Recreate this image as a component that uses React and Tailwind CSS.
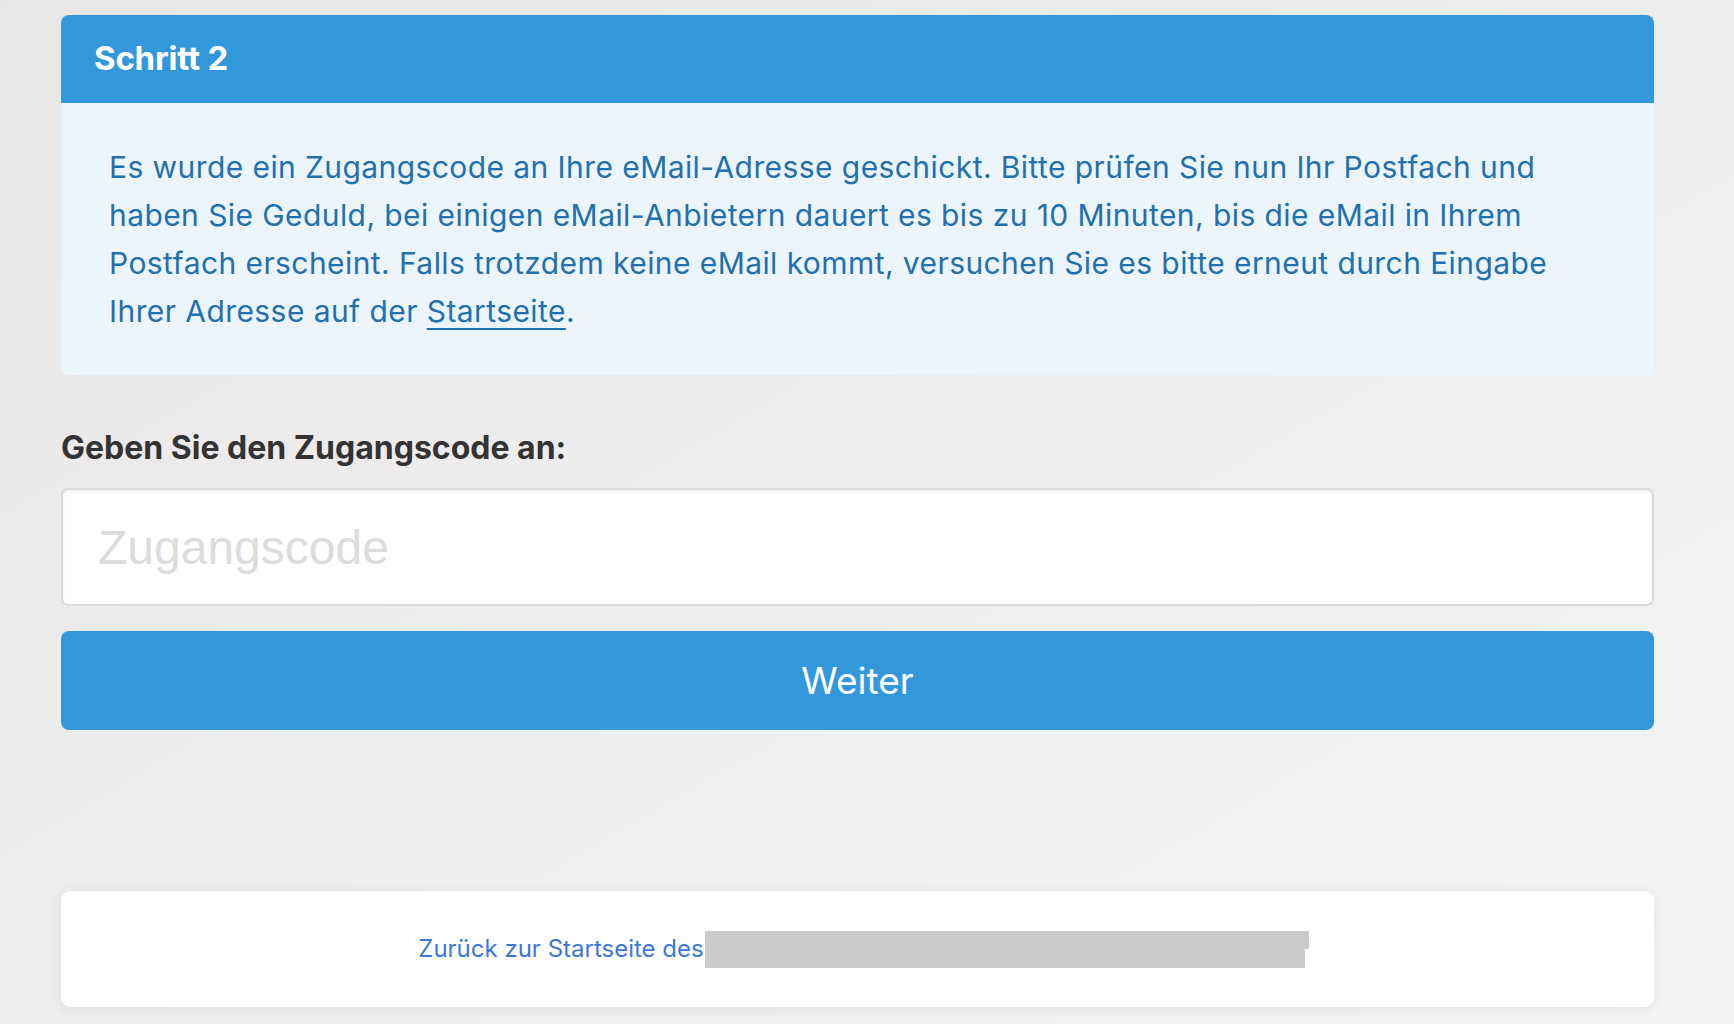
export default function App() {
  return (
    <div
      className="min-h-screen w-full bg-gradient-to-br from-[#e9e6e6] via-[#efeeee] to-[#f4f4f4] pt-[15px] pb-[17px]"
      style={{ fontFamily: 'Inter, "Noto Sans", sans-serif' }}
    >
      <div className="ml-[61px] w-[1593px]">
        {/* Schritt-Karte */}
        <div className="rounded-[8px] overflow-hidden">
          <div className="h-[88px] bg-[#3398db] flex items-center px-[33px]">
            <h2 className="text-[33px] font-bold text-white tracking-[-0.2px]">Schritt 2</h2>
          </div>
          <div className="bg-[#edf5fc] px-[48px] py-[40px] rounded-b-[6px]">
            <p className="text-[30px] leading-[48px] text-[#2270ad] tracking-[0.42px] whitespace-nowrap">
              Es wurde ein Zugangscode an Ihre eMail-Adresse geschickt. Bitte prüfen Sie nun Ihr Postfach und
              <br />
              haben Sie Geduld, bei einigen eMail-Anbietern dauert es bis zu 10 Minuten, bis die eMail in Ihrem
              <br />
              Postfach erscheint. Falls trotzdem keine eMail kommt, versuchen Sie es bitte erneut durch Eingabe
              <br />
              Ihrer Adresse auf der{' '}
              <a href="#" className="underline underline-offset-[6px] decoration-2">Startseite</a>.
            </p>
          </div>
        </div>

        {/* Formular */}
        <label className="block mt-[53px] text-[32px] leading-[40px] font-bold text-[#333333]">
          Geben Sie den Zugangscode an:
        </label>
        <input
          type="text"
          placeholder="Zugangscode"
          className="mt-[20px] block w-full h-[118px] rounded-[7px] border-2 border-[#dadada] bg-white px-[35px] text-[48px] font-light text-[#333] placeholder:text-[#dcdcdc] shadow-[inset_0_2px_3px_rgba(0,0,0,0.05)] outline-none"
          style={{ fontFamily: '"Liberation Sans", Arial, sans-serif' }}
        />
        <button className="mt-[25px] w-full h-[99px] rounded-[8px] bg-[#3398db] text-white text-[37px] flex items-center justify-center">
          Weiter
        </button>

        {/* Fußzeile */}
        <div className="mt-[161px] h-[116px] rounded-[9px] bg-white shadow-[0_2px_14px_rgba(0,0,0,0.07)] flex items-center justify-center">
          <p className="text-[24px] text-[#3b78dc] flex items-center translate-x-[4px]">
            <span>Zurück zur Startseite des</span>
            <span className="relative inline-block w-[600px] h-[37px] bg-[#cbcbcb] ml-[1px]">
              <span className="absolute right-[-4px] top-0 w-[10px] h-[18px] bg-[#cbcbcb]" />
            </span>
          </p>
        </div>
      </div>
    </div>
  );
}
